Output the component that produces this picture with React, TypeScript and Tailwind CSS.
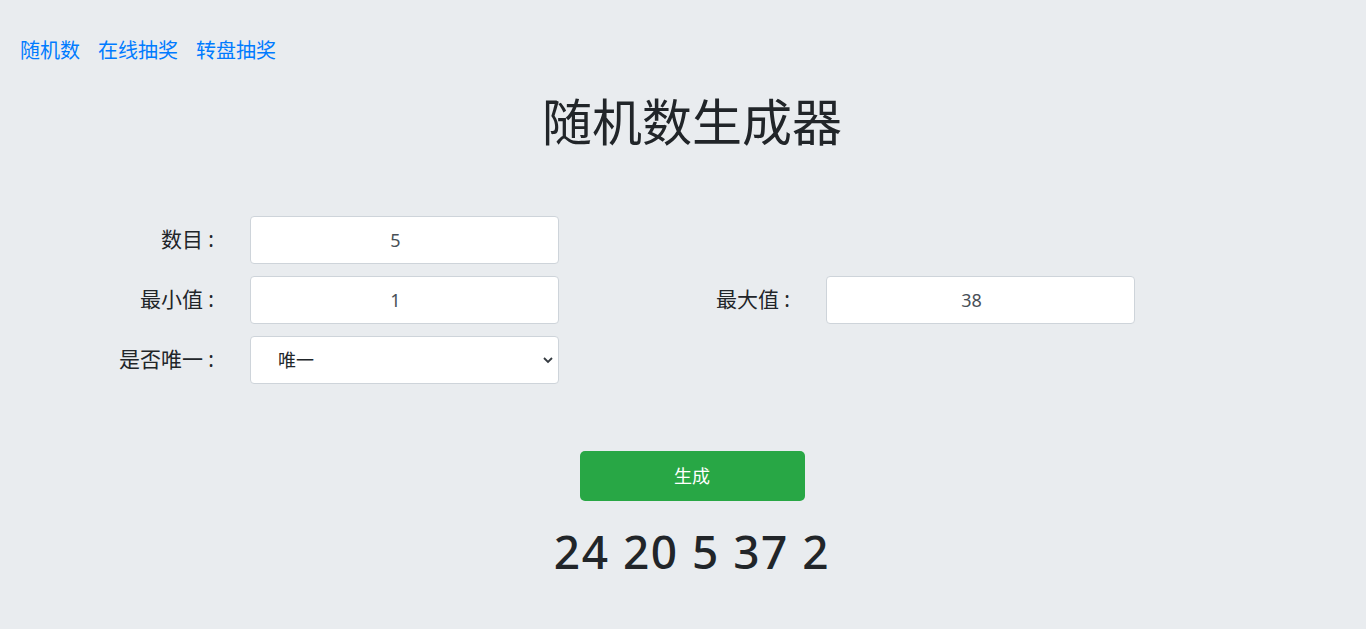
import React from "react";

const font = { fontFamily: '"Noto Sans", "Noto Sans CJK SC", sans-serif' };

function Field({ label, children }: { label: string; children: React.ReactNode }) {
    return (
        <div className="flex items-center">
            <label className="w-[114px] text-right text-[21px] text-[#212529] whitespace-nowrap">{label}</label>
            <div className="ml-[36px]">{children}</div>
        </div>
    );
}

const inputCls =
    "w-[309px] h-[48px] rounded-[4px] border border-[#ced4da] bg-white pl-3 pr-[30px] text-center text-[18px] text-[#495057] outline-none";

export default function App() {
    const [count, setCount] = React.useState("5");
    const [min, setMin] = React.useState("1");
    const [max, setMax] = React.useState("38");
    const [unique, setUnique] = React.useState("1");

    return (
        <div className="min-h-[629px] w-full bg-[#e9ecef]" style={font}>
            <nav className="flex gap-[18px] pl-[20px] pt-[37px] text-[20px] leading-[28px]">
                <a href="#" className="text-[#007bff]">随机数</a>
                <a href="#" className="text-[#007bff]">在线抽奖</a>
                <a href="#" className="text-[#007bff]">转盘抽奖</a>
            </nav>

            <div className="pl-[18px]">
                <h1 className="mt-[22px] text-center text-[50px] leading-[70px] text-[#212529]">随机数生成器</h1>
            </div>

            <form className="mt-[59px] flex flex-col gap-[12px] pl-[100px]" onSubmit={(e) => e.preventDefault()}>
                <Field label="数目 :">
                    <input className={inputCls} value={count} onChange={(e) => setCount(e.target.value)} />
                </Field>
                <div className="flex items-center">
                    <Field label="最小值 :">
                        <input className={inputCls} value={min} onChange={(e) => setMin(e.target.value)} />
                    </Field>
                    <div className="ml-[117px]">
                        <Field label="最大值 :">
                            <input className={inputCls} value={max} onChange={(e) => setMax(e.target.value)} />
                        </Field>
                    </div>
                </div>
                <Field label="是否唯一 :">
                    <div className="relative">
                        <select
                            className="w-[309px] h-[48px] appearance-none rounded-[4px] border border-[#ced4da] bg-white pl-[27px] text-[18px] text-[#212529] outline-none"
                            value={unique}
                            onChange={(e) => setUnique(e.target.value)}
                        >
                            <option value="1">唯一</option>
                            <option value="0">不唯一</option>
                        </select>
                        <svg className="pointer-events-none absolute right-[5px] top-[18px]" width="12" height="12" viewBox="0 0 12 12">
                            <path d="M2 4l4 4 4-4" fill="none" stroke="#343a40" strokeWidth="1.8" />
                        </svg>
                    </div>
                </Field>

                <div className="mt-[55px] flex justify-center pl-[18px] pr-[100px]">
                    <button className="w-[225px] h-[50px] rounded-[5px] bg-[#28a745] text-[18px] text-white">生成</button>
                </div>
            </form>

            <div className="mt-[20px] pl-[18px] text-center text-[46px] font-medium leading-[60px] tracking-[1.5px] text-[#212529]">
                24 20 5 37 2
            </div>
        </div>
    );
}
